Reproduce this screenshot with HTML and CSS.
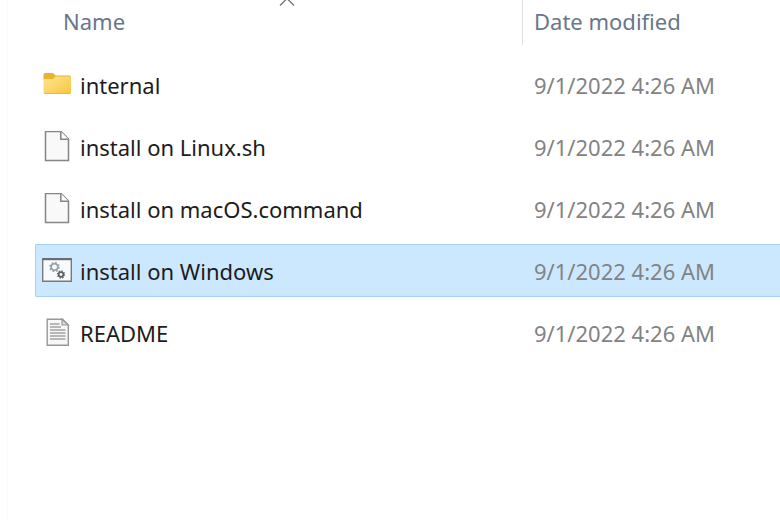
FILE: index.html
```html
<!DOCTYPE html>
<html lang="en">
<head>
<meta charset="utf-8">
<title>Files</title>
<link rel="stylesheet" href="styles.css">
</head>
<body>
<svg class="defs" width="0" height="0" aria-hidden="true">
  <defs>
    <linearGradient id="folder-face" x1="0" y1="0" x2="1" y2="1">
      <stop offset="0" stop-color="#ffe58e"/>
      <stop offset="1" stop-color="#f8c640"/>
    </linearGradient>
    <symbol id="page" viewBox="0 0 30 32">
      <path d="M3.5 .5H19L26.500 8V29.500H3.500Z" fill="#f9f9f9" stroke="#858585" stroke-width="1.500"/>
      <path d="M18.800 .5V8.200H26.500" fill="#fff" stroke="#858585" stroke-width="1.500"/>
    </symbol>
  </defs>
</svg>
<main class="pane">
  <table class="files">
    <thead>
      <tr class="head">
        <th scope="col" aria-sort="ascending"><button class="sort" type="button">Name
          <svg class="caret" width="16" height="9" viewBox="0 0 16 9" aria-hidden="true"><path d="M1 8.500L8 1.500L15 8.500" fill="none" stroke="#777" stroke-width="1.400"/></svg></button></th>
        <th scope="col"><button class="sort" type="button">Date modified</button></th>
      </tr>
    </thead>
    <tbody>
      <tr class="row">
        <td class="name"><svg class="icon" viewBox="0 0 30 32" aria-hidden="true"><path d="M1.500 5.500Q1.500 4 3 4H11L13.500 6.500H27.500Q29 6.500 29 8V11H1.500Z" fill="#eab42c"/><path d="M1.500 10H11L13.500 7.500H27.500Q29 7.500 29 9V23.500Q29 25 27.500 25H3Q1.500 25 1.500 23.500Z" fill="url(#folder-face)"/><path d="M2.500 24.500H28" stroke="#edb934"/></svg>internal</td>
        <td class="date">9/1/2022 4:26 AM</td>
      </tr>
      <tr class="row">
        <td class="name"><svg class="icon" aria-hidden="true"><use href="#page"/></svg>install on Linux.sh</td>
        <td class="date">9/1/2022 4:26 AM</td>
      </tr>
      <tr class="row">
        <td class="name"><svg class="icon" aria-hidden="true"><use href="#page"/></svg>install on macOS.command</td>
        <td class="date">9/1/2022 4:26 AM</td>
      </tr>
      <tr class="row selected" aria-selected="true">
        <td class="name"><svg class="icon" viewBox="0 0 30 32" aria-hidden="true"><path d="M.7 3.700H29.300V26.300H.7Z" fill="#f8fafb" stroke="#77797f" stroke-width="1.400"/><path d="M1 4.200H29" stroke="#696b72" stroke-width="2"/><g fill="none"><circle cx="12.500" cy="12" r="3.300" stroke="#98a0a4" stroke-width="1.600"/><circle cx="12.500" cy="12" r="4.500" stroke="#98a0a4" stroke-width="1.500" stroke-dasharray="1.770 1.770"/><circle cx="19" cy="19.500" r="2.300" stroke="#5a6267" stroke-width="1.700"/><circle cx="19" cy="19.500" r="3.500" stroke="#5a6267" stroke-width="1.300" stroke-dasharray="1.370 1.370"/></g></svg>install on Windows</td>
        <td class="date">9/1/2022 4:26 AM</td>
      </tr>
      <tr class="row">
        <td class="name"><svg class="icon" viewBox="0 0 30 32" aria-hidden="true"><path d="M5.200 2.200H20.500L26.300 8V28.300H5.200Z" fill="#f7f7f7" stroke="#989898" stroke-width="1.400"/><path d="M20 2.200V8H26.300Z" fill="#ddd" stroke="#989898" stroke-width="1.200"/><path d="M8 7H17.500M8 10H19M8 13H23.500M8 16H23.500M8 19H23.500M8 22H23.500" stroke="#a2a2a2" stroke-width="1.300"/></svg>README</td>
        <td class="date">9/1/2022 4:26 AM</td>
      </tr>
    </tbody>
  </table>
</main>
</body>
</html>
```
FILE: styles.css
```css
* {
  box-sizing: border-box;
}

body {
  margin: 0;
  background: #fff;
  color: #1c1c1c;
  font: 22px/30px "Segoe UI", "Noto Sans", "Open Sans", sans-serif;
}

.defs {
  position: absolute;
}

.pane {
  min-height: 100vh;
  margin-left: 7px;
  padding-left: 27px;
  border-left: 1px solid #fafafa;
  overflow: hidden;
}

.files,
.files thead {
  display: block;
}

.files tbody {
  display: grid;
  gap: 9px;
  padding-top: 13px;
}

.head,
.row {
  display: grid;
  grid-template-columns: 488px 1fr;
}

.head th {
  padding: 0;
  font-weight: 400;
  text-align: left;
}

.head th:first-child {
  padding-left: 17px;
  border-right: 1px solid #e2e2e2;
}

.sort {
  position: relative;
  display: block;
  width: 100%;
  height: 45px;
  padding: 0 11px 3px;
  border: 0;
  background: none;
  color: #68778a;
  font: inherit;
  text-align: left;
}

.caret {
  position: absolute;
  top: -3px;
  left: calc(50% - 8px);
}

.row {
  height: 53px;
  align-items: center;
  border: 1px solid transparent;
  border-right: 0;
}

.row td {
  padding: 0;
}

.row .name {
  display: flex;
  align-items: center;
  gap: 8px;
  padding-left: 6px;
}

.row .date {
  padding-left: 10px;
  color: #838383;
}

.icon {
  width: 30px;
  height: 32px;
  flex: none;
}

.row.selected {
  border-color: #a9cff0;
  border-radius: 2px 0 0 2px;
  background: #cce8ff;
}
```
